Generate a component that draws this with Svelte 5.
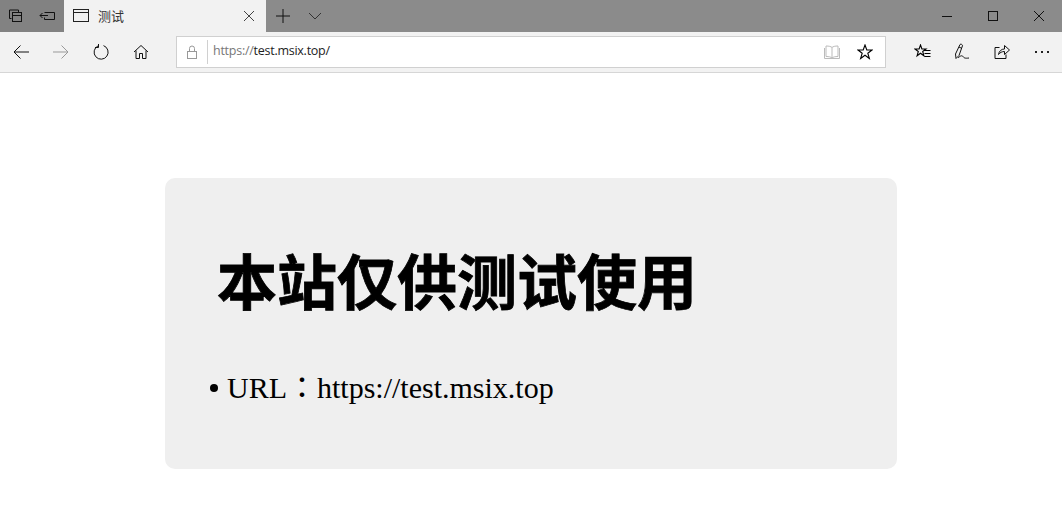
<script lang="ts">
  const title = "本站仅供测试使用";
  const url = "https://test.msix.top";
</script>

<div class="browser">
  <div class="titlebar">
    <div class="tab-tools">
      <button class="tool">
        <svg width="16" height="16" viewBox="0 0 16 16" fill="none" stroke="currentColor">
          <path d="M3.500 10.500h-2v-8.500h9v2.500"/>
          <rect x="4.500" y="4.500" width="9" height="9"/>
          <path d="M4.500 7.500h9"/>
        </svg>
      </button>
      <button class="tool">
        <svg width="18" height="16" viewBox="0 0 18 16" fill="none" stroke="currentColor">
          <path d="M5.500 4.500h10v7h-10v-2"/>
          <path d="M1 7.500h8M3.500 5l-2.500 2.500 2.500 2.500"/>
        </svg>
      </button>
    </div>
    <div class="tab">
      <svg width="16" height="14" viewBox="0 0 16 14" fill="none" stroke="#222">
        <rect x="0.500" y="0.500" width="15" height="12"/>
        <path d="M0.500 3.500h15"/>
      </svg>
      <span class="tab-title">测试</span>
      <svg class="tab-close" width="12" height="12" viewBox="0 0 12 12" fill="none" stroke="#444">
        <path d="M1 1l10 10M11 1l-10 10"/>
      </svg>
    </div>
    <button class="tool plus">
      <svg width="14" height="14" viewBox="0 0 14 14" fill="none" stroke="#111">
        <path d="M7 0v14M0 7h14"/>
      </svg>
    </button>
    <button class="tool chevron">
      <svg width="14" height="8" viewBox="0 0 14 8" fill="none" stroke="#333">
        <path d="M1 1l6 6 6-6"/>
      </svg>
    </button>
    <div class="window-controls">
      <button class="win">
        <svg width="12" height="12" viewBox="0 0 12 12" fill="none" stroke="#111"><path d="M1 6.500h10"/></svg>
      </button>
      <button class="win">
        <svg width="12" height="12" viewBox="0 0 12 12" fill="none" stroke="#111"><rect x="1.500" y="1.500" width="9" height="9"/></svg>
      </button>
      <button class="win">
        <svg width="12" height="12" viewBox="0 0 12 12" fill="none" stroke="#111"><path d="M1 1l10 10M11 1l-10 10"/></svg>
      </button>
    </div>
  </div>

  <div class="navbar">
    <div class="nav-buttons">
      <button class="nav">
        <svg width="16" height="14" viewBox="0 0 16 14" fill="none" stroke="#111"><path d="M16 7h-15M7.500 .5l-6.500 6.500 6.500 6.500"/></svg>
      </button>
      <button class="nav">
        <svg width="16" height="14" viewBox="0 0 16 14" fill="none" stroke="#999"><path d="M0 7h15M8.500 .5l6.500 6.500-6.500 6.500"/></svg>
      </button>
      <button class="nav">
        <svg width="16" height="16" viewBox="0 0 16 16" fill="none" stroke="#111"><path d="M5 1.900a7 7 0 1 0 5.500-.3M5.500 0v3.500h-3.500"/></svg>
      </button>
      <button class="nav">
        <svg width="16" height="16" viewBox="0 0 16 16" fill="none" stroke="#111"><path d="M1 8l7-6.500 7 6.500M3 6.500v8h3.500v-5h3v5h3.500v-8"/></svg>
      </button>
    </div>
    <div class="addressbar">
      <svg class="lock" width="12" height="14" viewBox="0 0 12 14" fill="none" stroke="#999">
        <rect x="1.500" y="6.500" width="9" height="7"/>
        <path d="M3.500 6.500v-3a2.500 2.500 0 0 1 5 0v3"/>
      </svg>
      <span class="address-sep"></span>
      <span class="address"><span class="scheme">https://</span>test.msix.top/</span>
      <svg class="reader" width="16" height="14" viewBox="0 0 16 14" fill="none" stroke="#bbb">
        <path d="M8 2.500v10.500M8 2.500c-1-1-3-1.500-6-1.500v10.500c3 0 5 .5 6 1.500 1-1 3-1.500 6-1.500v-10.500c-3 0-5 .5-6 1.500z"/>
        <path d="M.5 3v10.500h15v-10.500"/>
      </svg>
      <svg class="star" width="16" height="16" viewBox="0 0 16 16" fill="none" stroke="#000" stroke-width="1.100">
        <path d="M8 1l1.800 5h5.200l-4.200 3.200 1.600 5.300-4.400-3.200-4.400 3.200 1.600-5.300-4.200-3.200h5.200z"/>
      </svg>
    </div>
    <div class="nav-actions">
      <button class="action">
        <svg width="17" height="16" viewBox="0 0 17 16" fill="none" stroke="#000" stroke-width="1.100">
          <path d="M6.500 1l1.400 4h4.100l-3.300 2.500 1.200 4.300-3.400-2.600-3.400 2.600 1.200-4.300-3.300-2.500h4.100z"/>
          <path d="M10 6.500h6.500M10.500 9.500h6M10.500 12.500h6"/>
        </svg>
      </button>
      <button class="action">
        <svg width="16" height="18" viewBox="0 0 16 18" fill="none" stroke="#111">
          <path d="M2 15.500l-.5-4.500 4.500-9.500c.8-.8 2.500 0 2.500 1.200l-3.500 9.800zM5 4l3 1.500"/>
          <path d="M4 15c2-2 4-3 5-1.500s2 2 6 1.500"/>
        </svg>
      </button>
      <button class="action">
        <svg width="16" height="16" viewBox="0 0 16 16" fill="none" stroke="#111">
          <path d="M5.500 3.500h-4.500v11h11v-4"/>
          <path d="M4.500 10.500c.5-3.500 3-5.500 6-5.500v-3.500l5 4.500-5 4.500v-3c-2.500 0-4.500 1-6 3z"/>
        </svg>
      </button>
      <button class="action more">
        <i></i><i></i><i></i>
      </button>
    </div>
  </div>

  <main class="page">
    <section class="card">
      <h1>{title}</h1>
      <ul>
        <li>URL：{url}</li>
      </ul>
    </section>
  </main>
</div>

<style>
  :global(body) {
    margin: 0;
    background: #fff;
  }

  .browser {
    width: 1062px;
    height: 529px;
    overflow: hidden;
    display: flex;
    flex-direction: column;
  }

  button {
    border: 0;
    padding: 0;
    background: none;
    display: flex;
    align-items: center;
    justify-content: center;
  }

  /* 标题栏 */
  .titlebar {
    height: 32px;
    flex: none;
    display: flex;
    background: #8b8b8b;
  }

  .tab-tools {
    width: 64px;
    display: flex;
    background: #828282;
  }

  .tool {
    width: 32px;
    height: 32px;
    color: #111;
  }

  .tab {
    width: 202px;
    box-sizing: border-box;
    padding: 0 11px 0 9px;
    display: flex;
    align-items: center;
    background: #f2f2f2;
  }

  .tab-title {
    margin: -2px 0 0 9px;
    font: 13px "Noto Sans CJK SC", sans-serif;
    color: #333;
  }

  .tab-close {
    margin-left: auto;
  }

  .plus {
    width: 34px;
  }

  .chevron {
    width: 30px;
  }

  .window-controls {
    margin-left: auto;
    display: flex;
  }

  .win {
    width: 46px;
    height: 32px;
  }

  /* 地址栏 */
  .navbar {
    height: 41px;
    flex: none;
    box-sizing: border-box;
    display: flex;
    align-items: center;
    background: #f2f2f2;
    border-bottom: 1px solid #d6d6d6;
  }

  .nav-buttons {
    width: 176px;
    padding-left: 1px;
    box-sizing: border-box;
    display: flex;
  }

  .nav {
    width: 40px;
    height: 40px;
  }

  .addressbar {
    width: 710px;
    height: 32px;
    box-sizing: border-box;
    display: flex;
    align-items: center;
    background: #fff;
    border: 1px solid #d0d0d0;
  }

  .lock {
    margin-left: 9px;
  }

  .address-sep {
    width: 1px;
    height: 24px;
    margin-left: 9px;
    background: #d0d0d0;
  }

  .address {
    margin: -4px 0 0 5px;
    font: 12.500px "Open Sans", "Liberation Sans", sans-serif;
    letter-spacing: -0.26px;
    color: #222;
  }

  .scheme {
    color: #777;
  }

  .reader {
    margin-left: auto;
  }

  .star {
    margin: 0 12px 0 17px;
  }

  .nav-actions {
    display: flex;
    padding-left: 16px;
  }

  .action {
    width: 40px;
    height: 40px;
  }

  .more {
    gap: 4px;
  }

  .more i {
    width: 2px;
    height: 2px;
    background: #222;
  }

  /* 页面内容 */
  .page {
    flex: 1;
    padding: 105px 165px 0;
  }

  .card {
    width: 732px;
    height: 291px;
    box-sizing: border-box;
    padding: 61px 44px 0;
    background: #efefef;
    border-radius: 10px;
  }

  h1 {
    margin: 0 0 0 8px;
    font: 700 60px/80px "Noto Sans CJK SC", sans-serif;
    -webkit-text-stroke: 0.8px #000;
    color: #000;
  }

  ul {
    margin: 49px 0 0;
    padding: 0;
    list-style: none;
  }

  li {
    font: 30px/40px "Liberation Serif", "Noto Sans CJK TC", serif;
    color: #000;
    padding-left: 18px;
    position: relative;
  }

  li::before {
    content: "";
    position: absolute;
    left: 1px;
    top: 16px;
    width: 8px;
    height: 8px;
    border-radius: 50%;
    background: #000;
  }
</style>
